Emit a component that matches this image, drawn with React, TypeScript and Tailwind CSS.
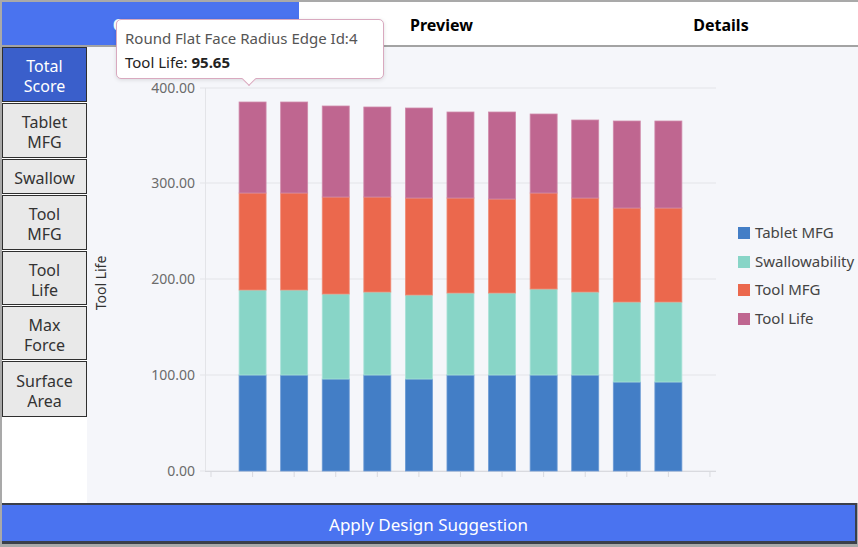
import React from 'react';

const FONT = { fontFamily: '"Noto Sans", "Open Sans", sans-serif' };

// pixel tops of each stacked segment: [blue, teal, orange, pink]
const bars = [
  [375, 290, 193, 102],
  [375, 290, 193, 102],
  [379, 294, 197, 106],
  [375, 292, 197, 107],
  [379, 295, 198, 108],
  [375, 293, 198, 112],
  [375, 293, 199, 112],
  [375, 289, 193, 114],
  [375, 292, 198, 120],
  [382, 302, 208, 121],
  [382, 302, 208, 121],
];

const colors = ['#437ec6', '#88d5c7', '#eb684d', '#bf6690'];
const strokes = ['#6b9ad4', '#a9e2d8', '#f08c77', '#d08aab'];
const legend = ['Tablet MFG', 'Swallowability', 'Tool MFG', 'Tool Life'];
const legendY = [233, 262, 290, 319];
const yTicks = [
  { y: 88, label: '400.00' },
  { y: 183, label: '300.00' },
  { y: 279, label: '200.00' },
  { y: 375, label: '100.00' },
  { y: 471, label: '0.00' },
];

const sideItems = [
  { label: ['Total', 'Score'], active: true, h: 'h-[55px]' },
  { label: ['Tablet', 'MFG'], h: 'h-[55px]' },
  { label: ['Swallow'], h: 'h-[35px]' },
  { label: ['Tool', 'MFG'], h: 'h-[55px]' },
  { label: ['Tool', 'Life'], h: 'h-[54px]' },
  { label: ['Max', 'Force'], h: 'h-[54px]' },
  { label: ['Surface', 'Area'], h: 'h-[56px]' },
];

function Chart() {
  const step = 41.58;
  const x0 = 211;
  return (
    <svg className="absolute inset-0" width="771" height="456" viewBox="87 47 771 456">
      {yTicks.map((t) => (
        <g key={t.label}>
          <line x1={200} x2={716} y1={t.y} y2={t.y} stroke="#e3e4e8" strokeWidth="1" />
          <text x={195} y={t.y + 5} textAnchor="end" fontSize="14" fill="#6b6b6b" style={FONT}>
            {t.label}
          </text>
        </g>
      ))}
      <line x1={205.5} x2={205.5} y1={88} y2={471} stroke="#e3e4e8" />
      <line x1={205} x2={716} y1={471.5} y2={471.5} stroke="#d9dadf" />
      {Array.from({ length: 13 }).map((_, i) => (
        <line key={i} x1={x0 + i * step} x2={x0 + i * step} y1={471} y2={477} stroke="#d9dadf" />
      ))}
      {bars.map((b, i) => {
        const cx = x0 + (i + 1) * step;
        const bottoms = [471, b[0], b[1], b[2]];
        return (
          <g key={i}>
            {b.map((top, j) => (
              <rect
                key={j}
                x={cx - 13.5}
                y={top}
                width={27}
                height={bottoms[j] - top}
                fill={colors[j]}
                stroke={strokes[j]}
                strokeWidth="0.8"
              />
            ))}
          </g>
        );
      })}
      <text
        x={106}
        y={283}
        transform="rotate(-90 106 283)"
        textAnchor="middle"
        fontSize="14"
        fill="#333"
        style={FONT}
      >
        Tool Life
      </text>
      {legend.map((l, i) => (
        <g key={l}>
          <rect x={738} y={legendY[i] - 6} width={12} height={12} fill={colors[i]} />
          <text x={755} y={legendY[i] + 5} fontSize="15" fill="#444" style={FONT}>
            {l}
          </text>
        </g>
      ))}
    </svg>
  );
}

export default function App() {
  return (
    <div
      className="relative w-[858px] h-[547px] overflow-hidden bg-[#a9a9a9] flex flex-col pt-[2px] pl-[2px]"
      style={FONT}
    >
      {/* tabs */}
      <div className="flex h-[45px] border-b-2 border-[#a3a3a3] bg-white">
        <div className="w-[297px] bg-[#4a73ef] flex items-center justify-center pt-[3px] text-white font-bold text-[16px]">
          Overview
        </div>
        <div className="w-[285px] flex items-center justify-center pt-[3px] font-bold text-[16px] text-black">
          Preview
        </div>
        <div className="flex-1 flex items-center justify-center pt-[3px] font-bold text-[16px] text-black">
          Details
        </div>
      </div>

      {/* body */}
      <div className="flex h-[456px] bg-white">
        <div className="w-[85px] flex flex-col gap-[1px] bg-white">
          {sideItems.map((s) => (
            <div
              key={s.label.join(' ')}
              className={`${s.h} flex flex-col items-center justify-center pt-[3px] border border-[#2f2f2f] text-[16px] leading-[20px] ${
                s.active ? 'bg-[#3a5fcb] text-white' : 'bg-[#e9e9e9] text-[#333]'
              }`}
            >
              {s.label.map((l) => (
                <span key={l}>{l}</span>
              ))}
            </div>
          ))}
        </div>
        <div className="relative flex-1 bg-[#f5f6fa]">
          <Chart />
        </div>
      </div>

      {/* apply button */}
      <div className="h-[41px] mr-[1px] border-t-2 border-b-[3px] border-r-2 border-[#3b3f4a] bg-[#4a73f0] flex items-center justify-center pt-[3px] text-white text-[17px]">
        Apply Design Suggestion
      </div>

      {/* tooltip */}
      <div className="absolute left-[116px] top-[19px] w-[268px] h-[60px] bg-white border border-[#d9a9bf] rounded-[5px] shadow-[0_1px_4px_rgba(0,0,0,0.12)] px-[8px] pt-[6px]">
        <div className="text-[15px] leading-[24px] text-[#555]">Round Flat Face Radius Edge Id:4</div>
        <div className="text-[15px] leading-[24px] text-[#222]">
          Tool Life: <span className="font-bold">95.65</span>
        </div>
        <div className="absolute left-[127px] -bottom-[6px] w-[10px] h-[10px] bg-white border-r border-b border-[#d9a9bf] rotate-45" />
      </div>
    </div>
  );
}
